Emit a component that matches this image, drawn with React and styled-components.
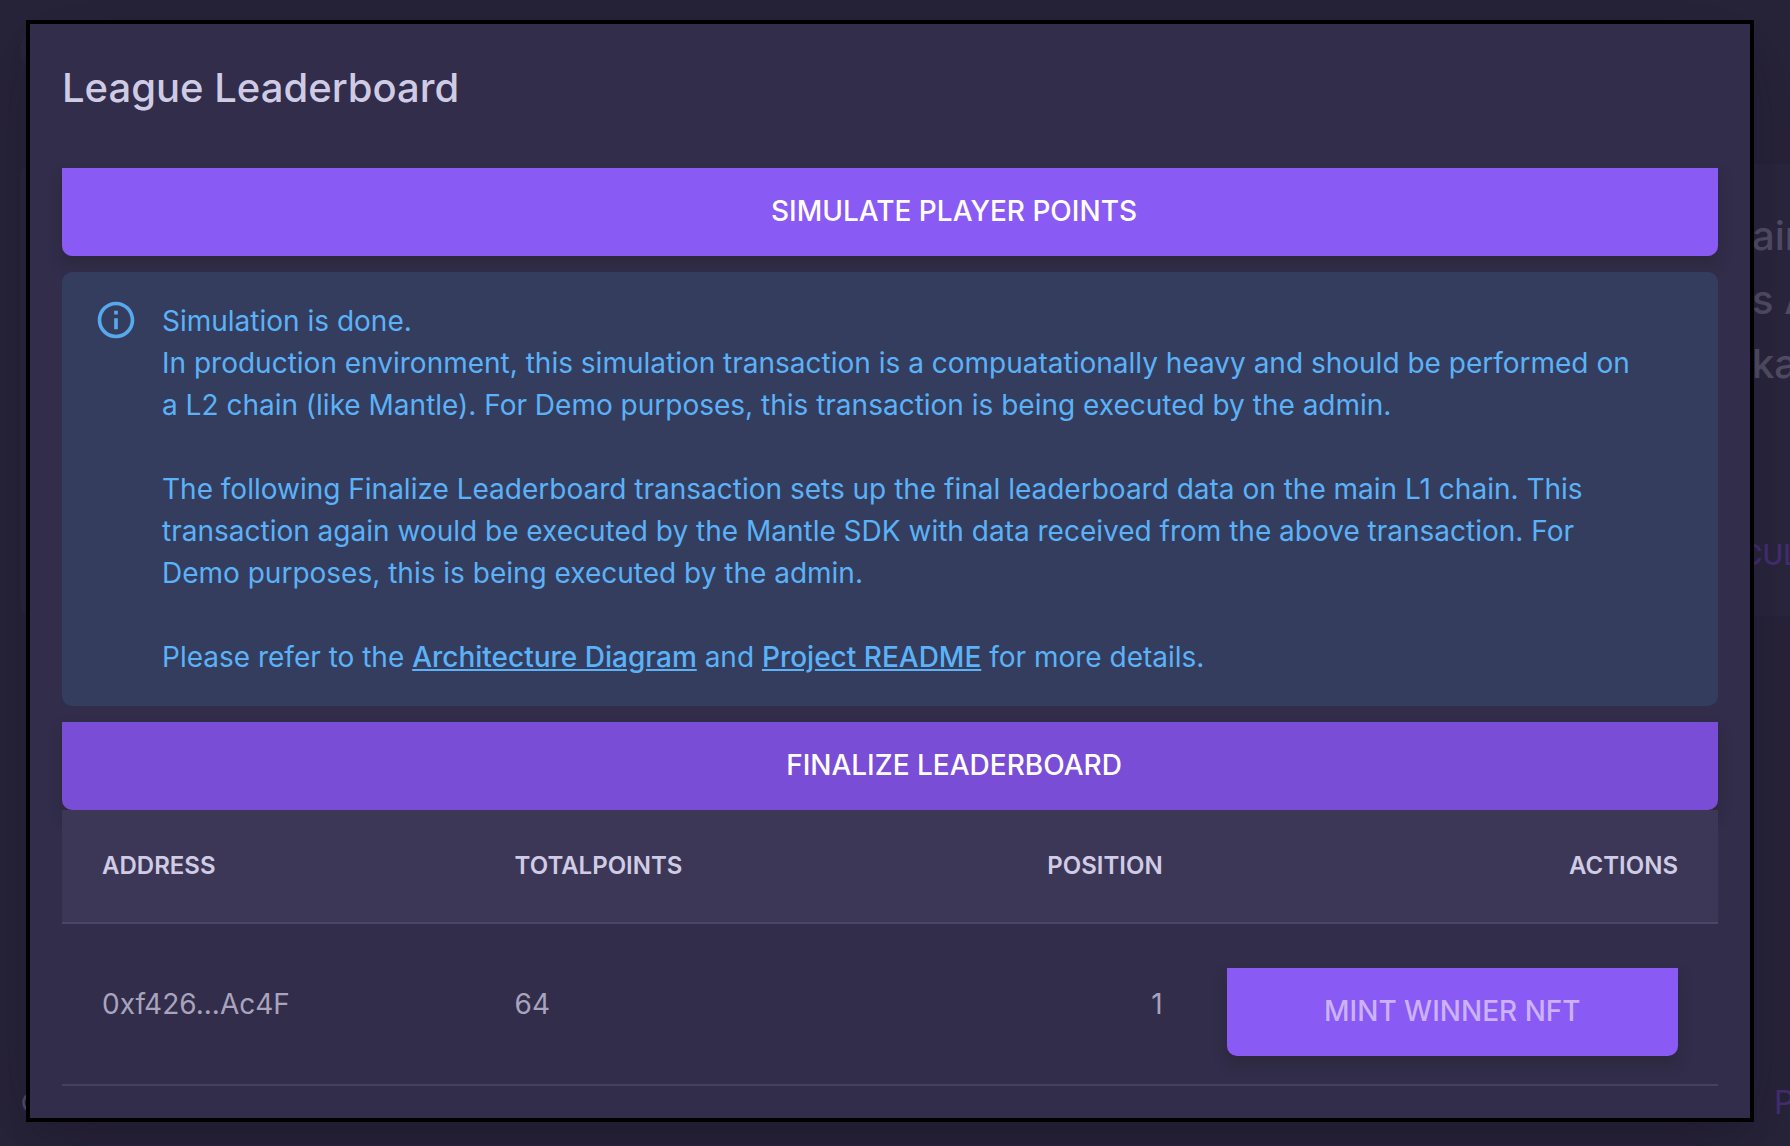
import React from "react";
import styled, { createGlobalStyle } from "styled-components";

const GlobalStyle = createGlobalStyle`
  *, *::before, *::after { box-sizing: border-box; }
  body {
    margin: 0;
    background: #28243a;
    font-family: Inter, "Liberation Sans", sans-serif;
    -webkit-font-smoothing: antialiased;
  }
`;

/* The page and the dialog share one grid cell, so the dialog lies over the page. */
const Screen = styled.div`
  display: grid;
  grid-template: minmax(100vh, auto) / minmax(0, 1fr);
`;

const Backdrop = styled.div`
  grid-area: 1 / 1;
  display: flex;
  flex-direction: column;
  padding: 28px 0 22px 20px;
  overflow: hidden;
`;

const Avatar = styled.div`
  width: 44px;
  height: 44px;
  border-radius: 50%;
  background: #2b283c;
`;

const PageCard = styled.section`
  display: flex;
  flex-direction: column;
  align-items: flex-end;
  gap: 138px;
  margin-top: 92px;
  padding: 40px 0;
  border-radius: 12px 0 0 12px;
  background: #2b273e;
`;

const Excerpt = styled.div`
  width: 38px;
  color: #565168;
  font-size: 40px;
  font-weight: 500;
  line-height: 64px;
  white-space: nowrap;
`;

const PageLink = styled.a`
  width: ${(p) => p.$width};
  color: #463075;
  font-size: ${(p) => p.$size};
  font-weight: ${(p) => p.$weight};
  line-height: 42px;
  text-decoration: none;
  white-space: nowrap;
`;

const PageFooter = styled.footer`
  display: flex;
  justify-content: space-between;
  margin-top: auto;
  color: #565168;
  font-size: 28px;
  line-height: 42px;
`;

const Dialog = styled.div`
  grid-area: 1 / 1;
  align-self: start;
  margin: 20px 36px 24px 26px;
  padding: 32px;
  border: 4px solid #000;
  background: #312d4a;
  box-shadow: 0 22px 30px -14px rgba(19, 15, 36, 0.2),
    0 18px 92px 16px rgba(19, 15, 36, 0.24);
`;

const Title = styled.h2`
  margin: 0 0 48px;
  color: #cfcbe5;
  font-size: 40px;
  font-weight: 500;
  line-height: 64px;
`;

const Button = styled.button`
  display: block;
  width: 100%;
  padding: 22px 44px 24px ${(p) => (p.$wide ? "172px" : "44px")};
  margin: ${(p) => (p.$spaced ? "16px 0 0" : "0")};
  border: 0;
  border-radius: 0 0 10px 10px;
  background: ${(p) => (p.$active ? "#794dd6" : "#8a5af5")};
  box-shadow: 0 8px 14px -2px rgba(42, 38, 54, 0.8);
  color: #fff;
  font-family: inherit;
  font-size: 28px;
  font-weight: 500;
  line-height: 42px;
  text-align: center;
  text-transform: uppercase;
  cursor: pointer;

  &:disabled {
    color: #cbb2fb;
    cursor: default;
  }
`;

const Alert = styled.div`
  display: flex;
  gap: 24px;
  margin: 16px 0;
  padding: 12px 32px;
  border-radius: 10px;
  background: #343d5e;
  color: #5bb2f8;
  font-size: 28px;
  line-height: 42px;
`;

const AlertIcon = styled.svg`
  flex: none;
  width: 44px;
  height: 44px;
  margin-top: 14px;
  fill: #56a9ec;
`;

const Message = styled.div`
  flex: 1;
  min-width: 0;
  padding: 16px 40px 16px 0;
`;

const Paragraph = styled.p`
  margin: 0;

  & + & {
    margin-top: 42px;
  }
`;

const AlertLink = styled.a`
  color: inherit;
  font-weight: 500;
  text-decoration: underline;
`;

const Table = styled.table`
  width: 100%;
  border-collapse: separate;
  border-spacing: 0;
  table-layout: fixed;
`;

const Column = styled.col`
  width: ${(p) => p.$width};
`;

const HeadCell = styled.th`
  padding: 32px;
  border-bottom: 2px solid #4c4666;
  background: #3d3757;
  color: #d0cce6;
  font-size: 24px;
  font-weight: 600;
  line-height: 48px;
  text-align: ${(p) => p.$align || "left"};
  text-transform: uppercase;

  &:first-child { padding-left: 40px; }
  &:last-child { padding-right: 40px; }
`;

const Cell = styled.td`
  padding: 28px 32px;
  border-bottom: 2px solid #454060;
  color: #a9a4be;
  font-size: 28px;
  line-height: 42px;
  text-align: ${(p) => p.$align || "left"};
  vertical-align: middle;

  &:first-child { padding-left: 40px; }
  &:last-child { padding-right: 40px; }
`;

function InfoIcon() {
  return (
    <AlertIcon viewBox="0 0 24 24" aria-hidden="true">
      <path d="M11 7h2v2h-2zm0 4h2v6h-2zm1-9C6.48 2 2 6.48 2 12s4.48 10 10 10 10-4.48 10-10S17.52 2 12 2zm0 18c-4.41 0-8-3.59-8-8s3.59-8 8-8 8 3.59 8 8-3.59 8-8 8z" />
    </AlertIcon>
  );
}

const rows = [{ address: "0xf426...Ac4F", points: 64, position: 1 }];

export default function App() {
  return (
    <>
      <GlobalStyle />
      <Screen>
        <Backdrop>
          <Avatar />
          <PageCard>
            <Excerpt>
              air
              <br />
              s A
              <br />
              ka
            </Excerpt>
            <PageLink href="#calculate" $width="48px" $size="28px" $weight={500}>
              CUL
            </PageLink>
          </PageCard>
          <PageFooter>
            <span>©</span>
            <PageLink href="#page" $width="16px" $size="32px" $weight={400}>
              P
            </PageLink>
          </PageFooter>
        </Backdrop>

        <Dialog role="dialog" aria-labelledby="leaderboard-title">
          <Title id="leaderboard-title">League Leaderboard</Title>
          <Button type="button" $wide>
            Simulate Player Points
          </Button>
          <Alert role="alert">
            <InfoIcon />
            <Message>
              <Paragraph>
                Simulation is done.
                <br />
                In production environment, this simulation transaction is a
                compuatationally heavy and should be performed on a L2 chain
                (like Mantle). For Demo purposes, this transaction is being
                executed by the admin.
              </Paragraph>
              <Paragraph>
                The following Finalize Leaderboard transaction sets up the final
                leaderboard data on the main L1 chain. This transaction again
                would be executed by the Mantle SDK with data received from the
                above transaction. For Demo purposes, this is being executed by
                the admin.
              </Paragraph>
              <Paragraph>
                Please refer to the{" "}
                <AlertLink href="#architecture">Architecture Diagram</AlertLink>{" "}
                and <AlertLink href="#readme">Project README</AlertLink> for
                more details.
              </Paragraph>
            </Message>
          </Alert>
          <Button type="button" $wide $active>
            Finalize Leaderboard
          </Button>
          <Table>
            <colgroup>
              <Column $width="25.4%" />
              <Column $width="21.5%" />
              <Column $width="21.5%" />
              <Column />
            </colgroup>
            <thead>
              <tr>
                <HeadCell scope="col">Address</HeadCell>
                <HeadCell scope="col">TotalPoints</HeadCell>
                <HeadCell scope="col" $align="right">Position</HeadCell>
                <HeadCell scope="col" $align="right">Actions</HeadCell>
              </tr>
            </thead>
            <tbody>
              {rows.map((row) => (
                <tr key={row.address}>
                  <Cell>{row.address}</Cell>
                  <Cell>{row.points}</Cell>
                  <Cell $align="right">{row.position}</Cell>
                  <Cell $align="right">
                    <Button type="button" $spaced disabled>
                      Mint Winner NFT
                    </Button>
                  </Cell>
                </tr>
              ))}
            </tbody>
          </Table>
        </Dialog>
      </Screen>
    </>
  );
}
